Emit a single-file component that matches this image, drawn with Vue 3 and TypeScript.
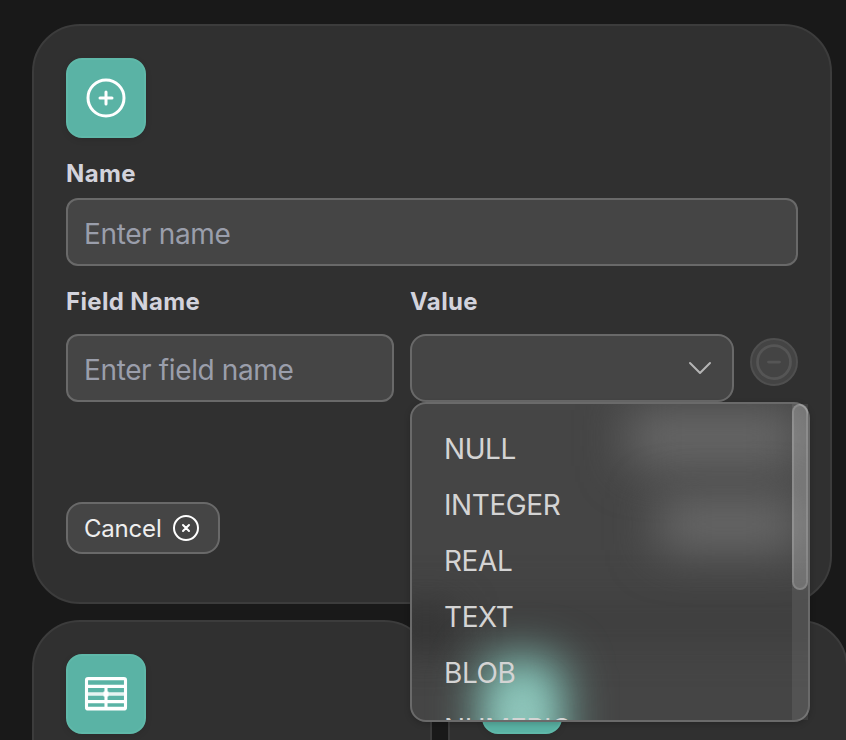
<script setup lang="ts">
import { ref } from 'vue'

const name = ref('')
const fieldName = ref('')
const types: string[] = ['NULL', 'INTEGER', 'REAL', 'TEXT', 'BLOB', 'NUMERIC']
</script>

<template>
  <main class="page">
    <section class="card create">
      <div class="tile">
        <svg width="48" height="48" viewBox="0 0 24 24" fill="none" stroke="currentColor" stroke-width="1.5" stroke-linecap="round" stroke-linejoin="round">
          <path d="M12 9v6m3-3H9m12 0a9 9 0 1 1-18 0 9 9 0 0 1 18 0Z" />
        </svg>
      </div>

      <label class="label" for="name">Name</label>
      <input id="name" v-model="name" class="control" placeholder="Enter name" />

      <div class="fields">
        <div class="field">
          <label class="label" for="field">Field Name</label>
          <input id="field" v-model="fieldName" class="control" placeholder="Enter field name" />
        </div>
        <div class="field value">
          <span class="label">Value</span>
          <div class="control select">
            <svg width="32" height="32" viewBox="0 0 32 32" fill="none" stroke="currentColor" stroke-width="2" stroke-linecap="round" stroke-linejoin="round">
              <path d="M6 11 16 21 26 11" />
            </svg>
          </div>
          <div class="menu">
            <div class="frost">
              <i class="haze band"></i>
              <i class="haze gutter"></i>
              <i class="haze upper"></i>
              <i class="haze lower"></i>
              <i class="haze teal"></i>
              <i class="haze core"></i>
            </div>
            <ul class="options">
              <li v-for="t in types" :key="t">{{ t }}</li>
            </ul>
            <div class="track"><div class="thumb"></div></div>
          </div>
        </div>
        <button class="remove" disabled>
          <svg width="44" height="44" viewBox="0 0 24 24" fill="none" stroke="currentColor" stroke-width="1.5" stroke-linecap="round">
            <path d="M15 12H9m12 0a9 9 0 1 1-18 0 9 9 0 0 1 18 0Z" />
          </svg>
        </button>
      </div>

      <div class="actions">
        <button class="cancel">
          <span>Cancel</span>
          <svg width="32" height="32" viewBox="0 0 24 24" fill="none" stroke="currentColor" stroke-width="1.5" stroke-linecap="round" stroke-linejoin="round">
            <path d="m9.75 9.75 4.5 4.5m0-4.5-4.5 4.5M21 12a9 9 0 1 1-18 0 9 9 0 0 1 18 0Z" />
          </svg>
        </button>
      </div>
    </section>

    <div class="tables">
      <section v-for="n in 2" :key="n" class="card table-card">
        <div class="tile">
          <svg width="48" height="48" viewBox="0 0 48 48" fill="none" stroke="currentColor" stroke-width="3.1" stroke-linejoin="round">
            <rect x="4.5" y="8.6" width="39" height="30.4" rx="1.6" />
            <path d="M5 16.4h38M5 31.6h38M24 17v22M6 38.4h36" />
            <path d="M5 24h38" stroke-width="3.4" stroke-opacity="0.85" />
            <path d="M21.5 24h5" stroke-width="5" />
          </svg>
        </div>
      </section>
    </div>
  </main>
</template>

<style>
body {
  background: #191919;
}
</style>

<style scoped>
* {
  box-sizing: border-box;
}
.page {
  width: 100%;
  height: 740px;
  overflow: hidden;
  padding: 24px 0 0 32px;
  display: flex;
  flex-direction: column;
  gap: 16px;
  background: #191919;
  font-family: Inter, sans-serif;
}
.card {
  flex: none;
  padding: 32px;
  border: 2px solid #3c3c3c;
  border-radius: 48px;
  background: #303030;
}
.create {
  position: relative;
  z-index: 1;
  width: 800px;
  height: 580px;
  display: flex;
  flex-direction: column;
}
.tile {
  width: 80px;
  height: 80px;
  flex: none;
  display: grid;
  place-items: center;
  border: 2px solid #5fb8a9;
  border-radius: 16px;
  background: #5ab3a5;
  color: #fff;
  box-shadow: 0 2px 6px rgba(0, 0, 0, 0.1);
}
.label {
  display: block;
  height: 32px;
  line-height: 32px;
  font-size: 24px;
  font-weight: 650;
  letter-spacing: 0.35px;
  color: #d3d3dc;
}
.create > .label {
  margin: 20px 0 8px;
}
.control {
  display: block;
  width: 100%;
  height: 68px;
  padding: 3px 16px 0;
  border: 2px solid #696969;
  border-radius: 12px;
  outline: none;
  background: #454545;
  color: #d4d4d4;
  font: 400 28px Inter, sans-serif;
  letter-spacing: -0.37px;
}
.control::placeholder {
  color: #9a9eab;
  opacity: 1;
}
.fields {
  display: flex;
  gap: 16px;
  margin-top: 20px;
}
.field {
  width: 328px;
}
.field .label {
  margin-bottom: 16px;
}
.value {
  position: relative;
  width: 324px;
}
.select {
  display: flex;
  align-items: center;
  justify-content: flex-end;
  border-radius: 16px;
  padding-top: 0;
  color: #b4b4b4;
}
.remove {
  width: 48px;
  height: 48px;
  margin-top: 52px;
  padding: 0;
  display: grid;
  place-items: center;
  border: 2px solid #4f4f4f;
  border-radius: 50%;
  background: #444;
  color: #555;
}
.menu {
  position: absolute;
  z-index: 2;
  top: 116px;
  left: 0;
  width: 400px;
  height: 320px;
  display: flex;
  border: 2px solid #6a6a6a;
  border-radius: 16px;
  background: #454545;
  box-shadow: 0 2px 6px rgba(0, 0, 0, 0.2);
}
.frost {
  position: absolute;
  inset: 0;
  overflow: hidden;
  border-radius: 14px;
}
.haze {
  position: absolute;
  display: block;
}
.upper {
  left: 216px;
  top: 6px;
  width: 172px;
  height: 56px;
  background: #6a6a6a;
  filter: blur(24px);
}
.lower {
  left: 246px;
  top: 94px;
  width: 142px;
  height: 52px;
  background: #6b6b6b;
  filter: blur(24px);
}
.band {
  left: -40px;
  top: 200px;
  width: 480px;
  height: 34px;
  background: #3d3d3d;
  filter: blur(20px);
}
.gutter {
  left: -14px;
  top: 206px;
  width: 56px;
  height: 38px;
  background: #303030;
  filter: blur(20px);
}
.teal {
  left: 69px;
  top: 254px;
  width: 82px;
  height: 140px;
  border-radius: 20px;
  background: #85cabd;
  filter: blur(24px);
}
.core {
  left: 86px;
  top: 282px;
  width: 48px;
  height: 50px;
  border-radius: 20px;
  background: rgba(160, 200, 192, 0.5);
  filter: blur(16px);
}
.options {
  position: relative;
  flex: 1;
  height: 316px;
  margin: 0;
  padding: 16px 32px;
  overflow: hidden;
  list-style: none;
  color: #d4d4d4;
  font-size: 28px;
  letter-spacing: -0.42px;
}
.options li {
  height: 56px;
  line-height: 58px;
}
.track {
  position: relative;
  width: 16px;
  background: rgba(255, 255, 255, 0.08);
}
.thumb {
  height: 186px;
  border: 2px solid rgba(255, 255, 255, 0.14);
  border-radius: 8px;
  background: rgba(255, 255, 255, 0.18);
}
.actions {
  margin-top: 100px;
}
.cancel {
  width: 154px;
  height: 52px;
  padding: 0 16px;
  display: flex;
  align-items: center;
  justify-content: space-between;
  border: 2px solid #696969;
  border-radius: 16px;
  background: #454545;
  color: #fff;
  font: 400 24px Inter, sans-serif;
  letter-spacing: -0.2px;
}
.cancel span {
  color: #eee;
}
.cancel svg {
  flex: none;
}
.tables {
  display: flex;
  gap: 16px;
}
.table-card {
  width: 400px;
  height: 400px;
}
</style>
